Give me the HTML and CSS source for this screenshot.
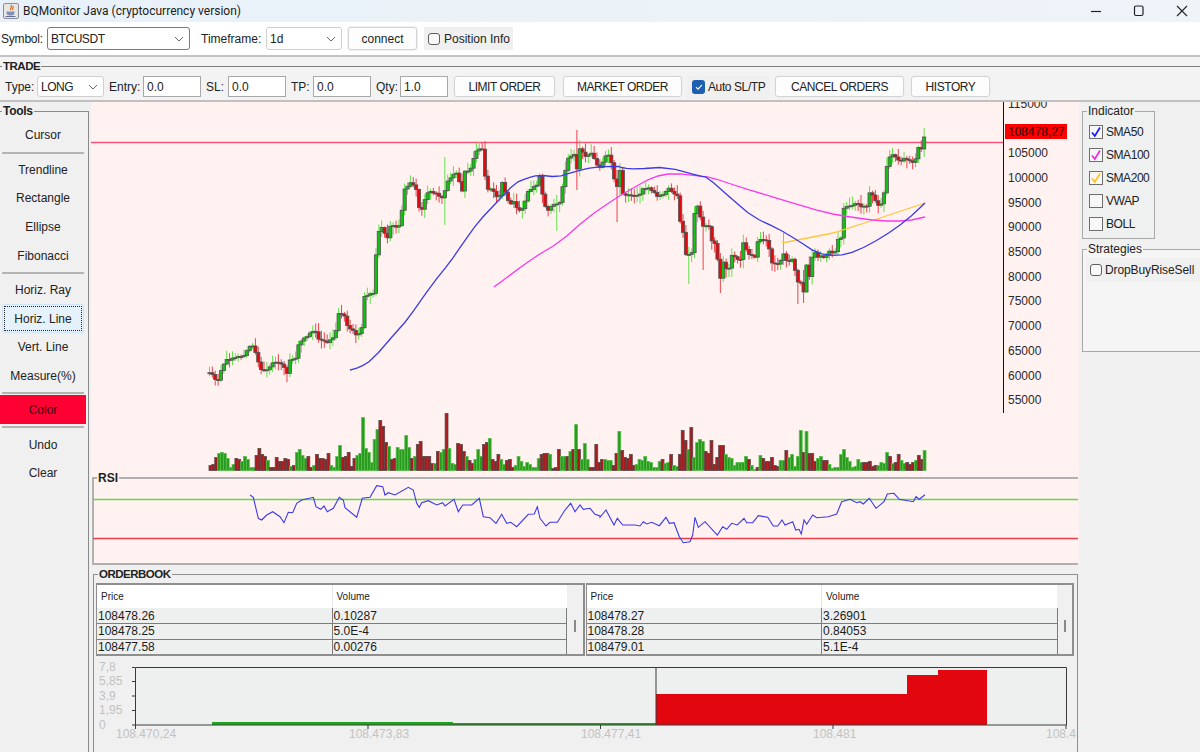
FILE: index.html
```html
<!DOCTYPE html>
<html lang="en">
<head>
<meta charset="utf-8">
<title>BQMonitor Java (cryptocurrency version)</title>
<link rel="stylesheet" href="styles.css">
</head>
<body>
<div class="app">
  <header class="titlebar">
    <svg class="app-icon" width="18" height="18" viewBox="0 0 18 18">
      <rect x="1.5" y="1.5" width="15" height="15" rx="1.5" fill="#e9e6e2" stroke="#8d8d96"/>
      <path d="M9 3c2 2-2 3 0 5M11 4c1 1.500-1.500 2.500 0 4" fill="none" stroke="#e0702a" stroke-width="1.300"/>
      <path d="M4.500 9.500h8v1.500a3 3 0 0 1-3 2.500h-2a3 3 0 0 1-3-2.500z" fill="#7f8fb5"/>
      <path d="M3.500 14.500h10" stroke="#5f6f95" stroke-width="1"/>
    </svg>
    <span class="title-text">BQMonitor Java (cryptocurrency version)</span>
    <div class="win-controls">
      <svg width="14" height="14" viewBox="0 0 14 14"><path d="M2 7.500h10" stroke="#222" stroke-width="1.200"/></svg>
      <svg width="14" height="14" viewBox="0 0 14 14"><rect x="2.500" y="2" width="8.500" height="9.500" rx="1.500" fill="none" stroke="#222" stroke-width="1.200"/></svg>
      <svg width="14" height="14" viewBox="0 0 14 14"><path d="M2 2l10 10M12 2L2 12" stroke="#222" stroke-width="1.100"/></svg>
    </div>
  </header>

  <section class="toolbar">
    <span class="lbl lbl-symbol">Symbol:</span>
    <div class="combo combo-symbol"><span class="caps">BTCUSDT</span><svg class="chev" width="10" height="6" viewBox="0 0 10 6"><path d="M1 1l4 4 4-4"/></svg></div>
    <span class="lbl lbl-timeframe">Timeframe:</span>
    <div class="combo combo-tf"><span>1d</span><svg class="chev" width="10" height="6" viewBox="0 0 10 6"><path d="M1 1l4 4 4-4"/></svg></div>
    <button class="btn btn-connect">connect</button>
    <label class="check-panel check-position"><span class="box box-round"></span>Position Info</label>
  </section>

  <div class="trade-wrap">
    <fieldset class="trade">
      <legend>TRADE</legend>
      <div class="trade-row">
        <span class="lbl lbl-type">Type:</span>
        <div class="combo combo-type"><span class="caps">LONG</span><svg class="chev" width="10" height="6" viewBox="0 0 10 6"><path d="M1 1l4 4 4-4"/></svg></div>
        <span class="lbl lbl-entry">Entry:</span><div class="field field-wide">0.0</div>
        <span class="lbl lbl-sl">SL:</span><div class="field field-wide">0.0</div>
        <span class="lbl lbl-tp">TP:</span><div class="field field-wide">0.0</div>
        <span class="lbl lbl-qty">Qty:</span><div class="field field-qty">1.0</div>
        <button class="btn btn-limit caps">LIMIT ORDER</button>
        <button class="btn btn-market caps">MARKET ORDER</button>
        <label class="check-panel check-auto"><span class="box box-on"><svg width="10" height="10" viewBox="0 0 10 10"><path d="M2 5.200l2 2 4-4.400" fill="none" stroke="#fff" stroke-width="1.100"/></svg></span>Auto SL/TP</label>
        <button class="btn btn-cancel caps">CANCEL ORDERS</button>
        <button class="btn btn-history caps">HISTORY</button>
      </div>
    </fieldset>
  </div>

  <main class="main">
    <aside class="tools-col">
      <fieldset class="tools">
        <legend>Tools</legend>
        <div class="tool">Cursor</div>
        <div class="tool-sep"></div>
        <div class="tool">Trendline</div>
        <div class="tool">Rectangle</div>
        <div class="tool">Ellipse</div>
        <div class="tool">Fibonacci</div>
        <div class="tool-sep"></div>
        <div class="tool">Horiz. Ray</div>
        <div class="tool tool-focus"><span>Horiz. Line</span></div>
        <div class="tool">Vert. Line</div>
        <div class="tool">Measure(%)</div>
        <div class="tool-sep tool-sep-short"></div>
        <div class="tool tool-color">Color</div>
        <div class="tool-sep tool-sep-after"></div>
        <div class="tool">Undo</div>
        <div class="tool">Clear</div>
      </fieldset>
    </aside>

    <div class="center-col">
      <svg id="chart" class="chart" width="988" height="369" viewBox="91 102 988 369">
        <line class="price-line" x1="91" x2="1003" y1="142.500" y2="142.500"/>
        <g id="candles"></g>
        <polyline id="sma200" class="sma sma-200"/>
        <polyline id="sma100" class="sma sma-100"/>
        <polyline id="sma50" class="sma sma-50"/>
        <g id="volumes"></g>
        <line class="axis-line" x1="1003.500" x2="1003.500" y1="102" y2="413"/>
        <g class="axis-labels">
          <text x="1008" y="108">115000</text>
          <text x="1008" y="157">105000</text>
          <text x="1008" y="182">100000</text>
          <text x="1008" y="207">95000</text>
          <text x="1008" y="231">90000</text>
          <text x="1008" y="256">85000</text>
          <text x="1008" y="281">80000</text>
          <text x="1008" y="305">75000</text>
          <text x="1008" y="330">70000</text>
          <text x="1008" y="355">65000</text>
          <text x="1008" y="380">60000</text>
          <text x="1008" y="404">55000</text>
        </g>
        <rect class="price-tag" x="1005" y="124" width="62" height="15"/>
        <text class="price-tag-text" x="1008" y="136">108478,27</text>
      </svg>

      <div class="rsi-wrap">
        <fieldset class="rsi"><legend>RSI</legend></fieldset>
        <svg class="rsi-plot" width="988" height="94" viewBox="91 471 988 94">
          <line class="rsi-high" x1="93" x2="1078" y1="499.500" y2="499.500"/>
          <line class="rsi-low" x1="93" x2="1078" y1="538.500" y2="538.500"/>
          <polyline id="rsi-line" class="rsi-line"/>
        </svg>
      </div>

      <div class="ob-wrap">
      <fieldset class="orderbook">
        <legend>ORDERBOOK</legend>
        <div class="book">
          <div class="book-side">
            <table class="book-table book-left">
              <thead><tr><th>Price</th><th>Volume</th></tr></thead>
              <tbody>
                <tr><td>108478.26</td><td>0.10287</td></tr>
                <tr><td>108478.25</td><td>5.0E-4</td></tr>
                <tr><td>108477.58</td><td>0.00276</td></tr>
                <tr class="row-cut"><td></td><td></td></tr>
              </tbody>
            </table>
            <div class="scroll"><span class="thumb"></span></div>
          </div>
          <div class="book-side">
            <table class="book-table book-right">
              <thead><tr><th>Price</th><th>Volume</th></tr></thead>
              <tbody>
                <tr><td>108478.27</td><td>3.26901</td></tr>
                <tr><td>108478.28</td><td>0.84053</td></tr>
                <tr><td>108479.01</td><td>5.1E-4</td></tr>
                <tr class="row-cut"><td></td><td></td></tr>
              </tbody>
            </table>
            <div class="scroll"><span class="thumb"></span></div>
          </div>
        </div>
        <svg class="depth" width="981" height="96" viewBox="95 656 981 96">
          <rect class="depth-plot" x="134.500" y="667.500" width="931" height="57.500"/>
          <path class="depth-bid" d="M211 722h241v1h203v2H211z"/>
          <path class="depth-ask" d="M655 694h251v-19h31v-5h49v55H655z"/>
          <path class="depth-axis" d="M134.500 667.500V725H1065.500V667.500H134.500M655 667.500V725M131 667.500h3M131 681.500h3M131 696h3M131 710.500h3M131 725h3M134.500 725v4M367 725v4M599.500 725v4M832 725v4M1065 725v4"/>
          <g class="depth-labels">
            <text x="98" y="671">7,8</text>
            <text x="98" y="685">5,85</text>
            <text x="98" y="700">3,9</text>
            <text x="98" y="714">1,95</text>
            <text x="98" y="729">0</text>
            <text x="115" y="738">108.470,24</text>
            <text x="348" y="738">108.473,83</text>
            <text x="580" y="738">108.477,41</text>
            <text x="812" y="738">108.481</text>
            <text x="1045" y="738">108.4</text>
          </g>
        </svg>
      </fieldset>
      </div>
    </div>

    <aside class="right-col">
      <fieldset class="indicator">
        <legend>Indicator</legend>
        <label class="ind"><span class="box box-ind"><svg width="12" height="12" viewBox="0 0 12 12"><path class="tick-blue" d="M2 6.500l2.800 3.500L10 1.500"/></svg></span><span class="caps">SMA50</span></label>
        <label class="ind"><span class="box box-ind"><svg width="12" height="12" viewBox="0 0 12 12"><path class="tick-magenta" d="M2 6.500l2.800 3.500L10 1.500"/></svg></span><span class="caps">SMA100</span></label>
        <label class="ind"><span class="box box-ind"><svg width="12" height="12" viewBox="0 0 12 12"><path class="tick-orange" d="M2 6.500l2.800 3.500L10 1.500"/></svg></span><span class="caps">SMA200</span></label>
        <label class="ind"><span class="box box-ind"></span><span class="caps">VWAP</span></label>
        <label class="ind"><span class="box box-ind"></span><span class="caps">BOLL</span></label>
      </fieldset>
      <fieldset class="strategies">
        <legend>Strategies</legend>
        <label class="check-panel check-strategy"><span class="box box-round"></span>DropBuyRiseSell</label>
      </fieldset>
    </aside>
  </main>
</div>
<script src="chart.js"></script>
</body>
</html>
```

FILE: styles.css
```css
* { box-sizing: border-box; }
html, body { margin: 0; padding: 0; }
body { width: 1200px; height: 752px; overflow: hidden; background: #f0f0f0; font: 12px/14px "Liberation Sans", Arial, sans-serif; color: #222; }
.app { width: 1200px; height: 752px; display: flex; flex-direction: column; overflow: hidden; }
.caps { letter-spacing: -0.45px; }

.titlebar { height: 22px; flex: none; display: flex; align-items: center; padding-left: 2px; background: linear-gradient(90deg, #e8f1f9, #eef4f8); }
.app-icon { flex: none; }
.title-text { margin-left: 3px; font-family: Roboto, "Liberation Sans", sans-serif; font-size: 12px; color: #1c1c1c; }
.win-controls { margin-left: auto; display: flex; gap: 29px; padding-right: 11px; }

.toolbar { height: 35px; flex: none; display: flex; align-items: center; background: #fff; border-bottom: 2px solid #c4c4c4; }
.lbl { flex: none; color: #222; }
.lbl-symbol { margin-left: 1px; width: 46px; letter-spacing: -0.2px; }
.lbl-timeframe { margin-left: 11px; width: 65px; }
.combo { flex: none; height: 23px; display: flex; align-items: center; justify-content: space-between; padding: 0 5px 0 3px; background: #fff; border: 1px solid #d0d0d0; border-radius: 3px; }
.combo-symbol { width: 143px; border-color: #7a7a7a; }
.combo-tf { width: 76px; }
.chev { flex: none; fill: none; stroke: #666; stroke-width: 1; }
.btn { flex: none; font: inherit; color: #222; background: #fdfdfd; border: 1px solid #d4d4d4; border-radius: 3px; height: 23px; padding: 0; box-shadow: 0 0 0 1px #f0f0f0; }
.btn.caps { letter-spacing: -0.45px; }
.btn-connect { width: 69px; margin-left: 6px; }
.check-panel { flex: none; display: flex; align-items: center; background: #f0f0f0; color: #222; white-space: nowrap; }
.check-position { width: 89px; height: 23px; margin-left: 7px; padding-left: 4px; gap: 4px; }
.box { flex: none; display: flex; align-items: center; justify-content: center; width: 12px; height: 12px; background: #fff; }
.box-round { border: 1px solid #5f5f5f; border-radius: 3px; background: #f8f8f8; }
.box-on { width: 13px; height: 14px; background: #1f5fb0; border-radius: 3px; }

.trade-wrap { height: 45px; flex: none; background: #f3f3f3; border-bottom: 2px solid #c0c0c0; padding-top: 2px; }
legend { font-weight: bold; padding: 0 1px; }
fieldset { margin: 0; padding: 0; min-width: 0; }
.trade { border: 0; border-top: 1px solid #808080; padding: 3px 0 0; }
.trade legend { margin-left: 2px; font-size: 11.5px; letter-spacing: -0.5px; }
.trade-row { display: flex; align-items: center; height: 21px; }
.trade-row .combo, .trade-row .btn, .field { height: 21px; }
.lbl-type { margin-left: 5px; width: 32px; }
.combo-type { width: 67px; }
.lbl-entry { margin-left: 5px; width: 34px; }
.lbl-sl { margin-left: 5px; width: 22px; }
.lbl-tp { margin-left: 5px; width: 22px; }
.lbl-qty { margin-left: 5px; width: 24px; }
.field { flex: none; display: flex; align-items: center; padding-left: 3px; background: #fff; border: 1px solid #a8a8a8; }
.field-wide { width: 58px; }
.field-qty { width: 48px; }
.btn-limit { width: 101px; margin-left: 6px; }
.btn-market { width: 119px; margin-left: 8px; }
.check-auto { width: 82px; height: 24px; margin-left: 5px; padding-left: 5px; gap: 3px; letter-spacing: -0.4px; }
.btn-cancel { width: 129px; margin-left: 6px; }
.btn-history { width: 79px; margin-left: 7px; }

.main { flex: 1; min-height: 0; display: grid; grid-template-columns: 91px 988px 121px; }
.tools-col { padding-top: 2px; background: #f0f0f0; }
.tools { width: 89px; height: 700px; border: 0; border-top: 1px solid #8a8a8a; border-right: 1px solid #8a8a8a; padding: 3px 0 0; }
.tools legend { margin-left: 2px; letter-spacing: -0.3px; }
.tool { width: 86px; height: 28.67px; display: flex; align-items: center; justify-content: center; color: #222; }
.tool-sep { height: 5.7px; display: flex; align-items: center; padding-left: 2px; }
.tool-sep::before { content: ""; width: 82px; height: 2px; background: #b4b4b4; }
.tool-sep-short { height: 5px; }
.tool-sep-after { height: 6px; }
.tool-focus { width: 82px; margin-left: 2px; background: #e5f1fb; border: 1px solid #cfe4f7; border-radius: 2px; padding: 1px; }
.tool-focus span { flex: 1; height: 100%; display: flex; align-items: center; justify-content: center; border: 1px dotted #222; }
.tool-color { width: 86px; height: 29px; background: #ff0033; color: #3a0010; }

.center-col { height: 650px; overflow: hidden; background: #fff2f0; }
.chart { display: block; }
.price-line { stroke: #f2557a; stroke-width: 1.300; }
.sma { fill: none; stroke-width: 1.300; }
.sma-50 { stroke: #3b3be8; }
.sma-100 { stroke: #f53af0; }
.sma-200 { stroke: #fcc83c; }
.axis-line { stroke: #111; stroke-width: 1; }
.axis-labels text, .price-tag-text { font: 12px "Liberation Sans", Arial, sans-serif; fill: #2a2a2a; }
.price-tag { fill: #ff0000; }
.price-tag-text { fill: #2a0000; }

.rsi-wrap { position: relative; height: 94px; }
.rsi { height: 94px; margin-left: 1px; width: 986px; border: 0; border-top: 2px solid #b0b0b0; border-left: 2px solid #b0b0b0; border-bottom: 2px solid #b0b0b0; }
.rsi legend { margin-left: 3px; }
.rsi-plot { position: absolute; left: 0; top: 0; }
.rsi-high { stroke: #62dc40; stroke-width: 1.300; }
.rsi-low { stroke: #f03c48; stroke-width: 1.300; }
.rsi-line { fill: none; stroke: #3b3bea; stroke-width: 1.100; }

.ob-wrap { height: 187px; padding: 2px 0 0 2px; background: #f0f0f0; overflow: hidden; }
.orderbook { width: 985px; height: 200px; background: #f0f0f0; border: 1px solid #8f8f8f; border-bottom: 0; padding: 2px 2px 0 2px; }
.orderbook legend { margin-left: 2px; font-size: 11.5px; letter-spacing: -0.5px; }
.book { display: flex; gap: 1px; width: 978px; }
.book-side { flex: 1; height: 73px; display: flex; border: 2px solid #8e8e8e; border-left-width: 1px; background: #f0f0f0; overflow: hidden; }
.book-table { flex: none; border-collapse: collapse; table-layout: fixed; height: 71px; }
.book-left { width: 470px; }
.book-right { width: 471px; }
.book-table th { height: 23px; padding: 0 0 0 4px; background: #fff; font-weight: normal; font-size: 10px; text-align: left; color: #222; border-left: 1px solid #e6e6e6; }
.book-table th:first-child { border-left: 0; }
.book-table td { height: 15.5px; padding: 0 0 0 1px; background: #eef0ef; border-bottom: 1px solid #7d7d7d; border-left: 1px solid #7d7d7d; border-right: 1px solid #7d7d7d; font-size: 12px; color: #1c1c1c; }
.book-table td:first-child { border-left: 0; }
.book-table th:first-child, .book-table td:first-child { width: 235px; }
.book-table .row-cut td { height: 3px; border-bottom: 0; }
.scroll { flex: 1; display: flex; align-items: center; justify-content: center; background: #f0f0f0; }
.thumb { width: 2px; height: 12px; background: #8a8a8a; margin-top: 12px; }
.depth { display: block; }
.depth-plot { fill: #eef0ef; }
.depth-bid { fill: #1ea51e; }
.depth-ask { fill: #e2070f; }
.depth-axis { fill: none; stroke: #3a3a3a; stroke-width: 1; }
.depth-labels text { font: 12px "Liberation Sans", Arial, sans-serif; fill: #c2c2c2; }

.right-col { padding: 2px 0 0 3px; background: #f0f0f0; overflow: hidden; }
.indicator { width: 73px; height: 135px; border: 1px solid #a8a8a8; padding: 2px 0 0 6px; background: #eff1f0; }
.indicator legend { font-weight: normal; margin-left: -2px; }
.ind { height: 23px; display: flex; align-items: center; gap: 3px; color: #222; white-space: nowrap; }
.box-ind { width: 14px; height: 14px; background: #f7f7f7; border: 1px solid #6e6e6e; }
.tick-blue, .tick-magenta, .tick-orange { fill: none; stroke-width: 1.700; }
.tick-blue { stroke: #1a1aff; }
.tick-magenta { stroke: #ff20ee; }
.tick-orange { stroke: #fcc020; }
.strategies { width: 125px; height: 110px; margin-top: 3px; border: 1px solid #a8a8a8; padding: 2px 0 0 3px; background: #f5f5f5; }
.strategies legend { font-weight: normal; margin-left: 1px; }
.check-strategy { width: 114px; height: 24px; padding-left: 4px; gap: 3px; letter-spacing: -0.1px; }
```

FILE: chart.js
```js
(function () {
  var NS = 'http://www.w3.org/2000/svg';
  var N = 250, X0 = 209.5, STEP = 2.87;

  function pairs(list) {
    var out = [];
    for (var i = 0; i < list.length; i += 2) out.push([list[i], list[i + 1]]);
    return out;
  }
  function points(p) {
    return p.map(function (q) { return q[0].toFixed(1) + ',' + q[1].toFixed(1); }).join(' ');
  }
  function smooth(p) {
    var out = [p[0]];
    for (var i = 0; i < p.length - 1; i++) {
      var a = p[i], b = p[i + 1];
      out.push([a[0] * 0.75 + b[0] * 0.25, a[1] * 0.75 + b[1] * 0.25]);
      out.push([a[0] * 0.25 + b[0] * 0.75, a[1] * 0.25 + b[1] * 0.75]);
    }
    out.push(p[p.length - 1]);
    return out;
  }
  function interp(p, x) {
    if (x <= p[0][0]) return p[0][1];
    for (var i = 1; i < p.length; i++) {
      if (x <= p[i][0]) {
        var a = p[i - 1], b = p[i];
        return a[1] + (b[1] - a[1]) * (x - a[0]) / Math.max(b[0] - a[0], 0.01);
      }
    }
    return p[p.length - 1][1];
  }
  function rnd(i) {
    var v = Math.sin(i * 12.9898 + 4.1) * 43758.5453;
    return v - Math.floor(v);
  }
  function el(parent, name, attrs) {
    var e = document.createElementNS(NS, name);
    for (var k in attrs) e.setAttribute(k, attrs[k]);
    parent.appendChild(e);
    return e;
  }

  var closes = pairs([
    210,373,214,376,217,383,222,367,227,360,234,357,243,357,250,346,254,347,257,357,260,370,267,371,273,363,282,363,287,373,
    290,360,297,358,298,345,308,335,315,330,318,338,328,342,335,337,338,313,343,313,348,327,357,335,362,328,363,298,373,293,
    375,275,377,233,383,227,387,240,390,225,398,227,400,223,405,187,412,183,417,190,420,217,425,198,430,190,442,198,448,180,
    457,172,462,193,463,172,470,170,477,148,483,148,485,177,487,188,495,192,498,202,502,182,507,198,510,205,515,202,518,212,
    523,207,528,192,537,185,538,167,542,192,547,213,552,204,560,203,563,183,568,157,575,155,577,170,580,148,585,157,592,153,
    597,165,602,170,603,158,610,155,613,175,617,188,620,170,623,195,640,195,643,188,650,188,657,197,665,193,667,187,678,196,
    680,220,683,233,685,255,692,253,695,207,700,207,701,245,703,225,710,227,712,243,717,245,718,273,722,283,723,262,728,272,
    732,255,740,263,743,243,748,255,755,257,758,239,768,242,772,263,780,263,782,252,788,263,793,258,797,283,802,283,803,293,
    805,293,806,263,810,280,812,260,813,250,818,257,825,257,828,252,837,252,838,240,841,238,842,210,848,207,857,203,860,208,
    867,205,868,193,873,195,877,205,882,205,883,193,886,193,887,162,893,153,900,163,903,157,905,160,915,162,917,146,923,150,925,137
  ]);

  var longWicks = { 445: [157, 225], 577: [130, 190], 617: [170, 222], 557: [195, 231], 689: [250, 284], 798: [280, 304], 805: [270, 303], 925: [128, 142], 720: [270, 293], 702: [230, 270], 784: [233, 265] };

  var candles = document.getElementById('candles');
  var prev = interp(closes, X0 - STEP);
  var wicks = el(candles, 'g', {});
  var bodies = el(candles, 'g', {});
  for (var i = 0; i < N; i++) {
    var x = X0 + STEP * i;
    var close = interp(closes, x) + (rnd(i) - 0.5) * 2.4;
    if (x > 923) close = 137;
    var up = close < prev;
    var bodyTop = Math.min(prev, close), bodyBot = Math.max(prev, close);
    var hi = bodyTop - 1 - rnd(i + 300) * 8;
    var lo = bodyBot + 1 + rnd(i + 600) * 8;
    for (var key in longWicks) {
      if (Math.abs(key - x) < STEP / 2) {
        hi = Math.min(hi, longWicks[key][0]);
        lo = Math.max(lo, longWicks[key][1]);
      }
    }
    el(wicks, 'line', { x1: x, x2: x, y1: hi, y2: lo, stroke: up ? '#4fe03a' : '#e8303a', 'stroke-width': 0.9 });
    el(bodies, 'rect', { x: x - 1.6, y: bodyTop, width: 3.2, height: Math.max(bodyBot - bodyTop, 1), fill: up ? '#14c014' : '#e00a10', stroke: '#505050', 'stroke-width': 0.8 });
    prev = close;
  }

  document.getElementById('sma50').setAttribute('points', points(smooth(pairs([
    350,370,360,367,372,360,398,330,407,320,433,283,450,262,463,243,478,222,497,202,515,183,527,178,538,175,557,177,573,172,593,167,
    617,166,623,168,637,169,667,167,700,176,707,177,733,200,753,217,777,228,797,240,817,253,837,256,857,251,883,237,907,220,925,203
  ]))));
  document.getElementById('sma100').setAttribute('points', points(smooth(pairs([
    494,287,533,258,560,242,587,218,613,200,633,188,653,177,673,173,700,176,710,177,740,187,783,200,827,213,850,217,880,221,907,221,925,217
  ]))));
  document.getElementById('sma200').setAttribute('points', points(pairs([
    782,243,833,233,883,217,925,203
  ])));

  var vols = [
    -5,-6,-13,17,18,17,12,3,6,-12,-11,9,14,11,3,3,-15,-22,-16,-14,10,-3,-3,-13,-9,-9,-12,-11,4,-5,18,21,15,12,-14,-3,5,-16,-12,-12,-11,-17,5,3,14,25,-13,-14,-18,-4,
    -12,15,17,53,22,18,8,31,41,-50,-44,-28,24,-11,-12,23,21,21,35,23,-12,14,-26,-29,-14,-14,-14,-7,7,-19,18,21,-57,22,7,6,-27,-26,-19,14,-10,-7,11,21,14,-26,-28,32,-11,-9,
    -16,11,6,-10,-11,-3,5,14,9,4,8,6,3,3,12,-16,-17,-17,16,-2,-3,-21,14,14,-14,19,-21,46,-21,11,27,11,-3,-3,-26,-8,
    -11,11,10,10,-5,-17,39,-20,-13,-12,-16,-5,6,11,10,14,9,8,3,3,9,-11,7,8,-16,5,4,-16,-40,-30,21,-43,13,28,31,29,-19,-17,-30,-6,-13,-25,-25,16,13,12,5,8,8,8,14,-11,5,1,-3,15,
    -12,-9,-9,-13,-5,-4,10,10,-20,13,16,4,14,40,-18,39,-17,-17,-9,12,14,-10,-10,6,2,3,3,16,21,13,9,3,4,11,8,-8,-8,-9,-4,-5,5,8,7,18,-14,7,-8,-16,10,7,-8,-6,-8,10,-15,-11,20
  ];
  var volStep = (926 - 209) / vols.length;
  var volumes = document.getElementById('volumes');
  vols.forEach(function (v, n) {
    var h = Math.abs(v), vx = 209 + volStep * n;
    el(volumes, 'rect', { x: vx, y: 470.5 - h, width: volStep, height: h, fill: v > 0 ? '#2a9a1e' : '#a81a1e', stroke: v > 0 ? '#55c04a' : '#5a4a4a', 'stroke-width': 0.8 });
  });

  var rsiA = pairs([
    150,255,160,262,175,325,185,330,200,315,218,305,240,320,252,338,265,307,278,308,290,280,305,270,340,262,348,290,362,298,372,288,382,305,400,295,418,262,430,270,435,293,470,322,487,265,510,262,530,227,548,230,555,255,565,248,585,255,625,232,640,240,650,280,658,292,665,278,685,272,710,285,728,278,735,288,762,268,775,305,788,285,815,285,838,265,850,320,870,323,888,340,905,313,920,340,932,337,950,350,985,313,1003,312,1012,290,1020,325,1038,348,1050,337,1072,337,1095,300,1112,280,1125,305,1140,285,1150,298,1170,295,1185,313,1200,318
  ]);
  var rsiB = pairs([
    0,322,18,300,42,345,52,325,68,345,105,345,120,348,130,335,140,342,155,337,178,347,198,322,208,340,222,338,238,380,250,398,270,395,278,375,285,322,295,352,315,335,352,375,368,350,380,358,395,340,412,345,432,325,440,338,458,338,475,317,503,322,520,348,533,348,546,330,555,345,578,335,587,360,597,358,604,372,612,330,620,343,638,315,650,323,685,320,710,312,725,275,750,268,770,278,780,275,790,282,808,265,828,295,852,275,862,252,882,250,898,268,940,275,948,260,958,268,975,254
  ]);
  var rsi = rsiA.map(function (p) { return [200 + p[0] / 3, 410 + p[1] / 3]; })
    .concat(rsiB.map(function (p) { return [600 + p[0] / 3, 410 + p[1] / 3]; }));
  document.getElementById('rsi-line').setAttribute('points', points(rsi));
})();
```
